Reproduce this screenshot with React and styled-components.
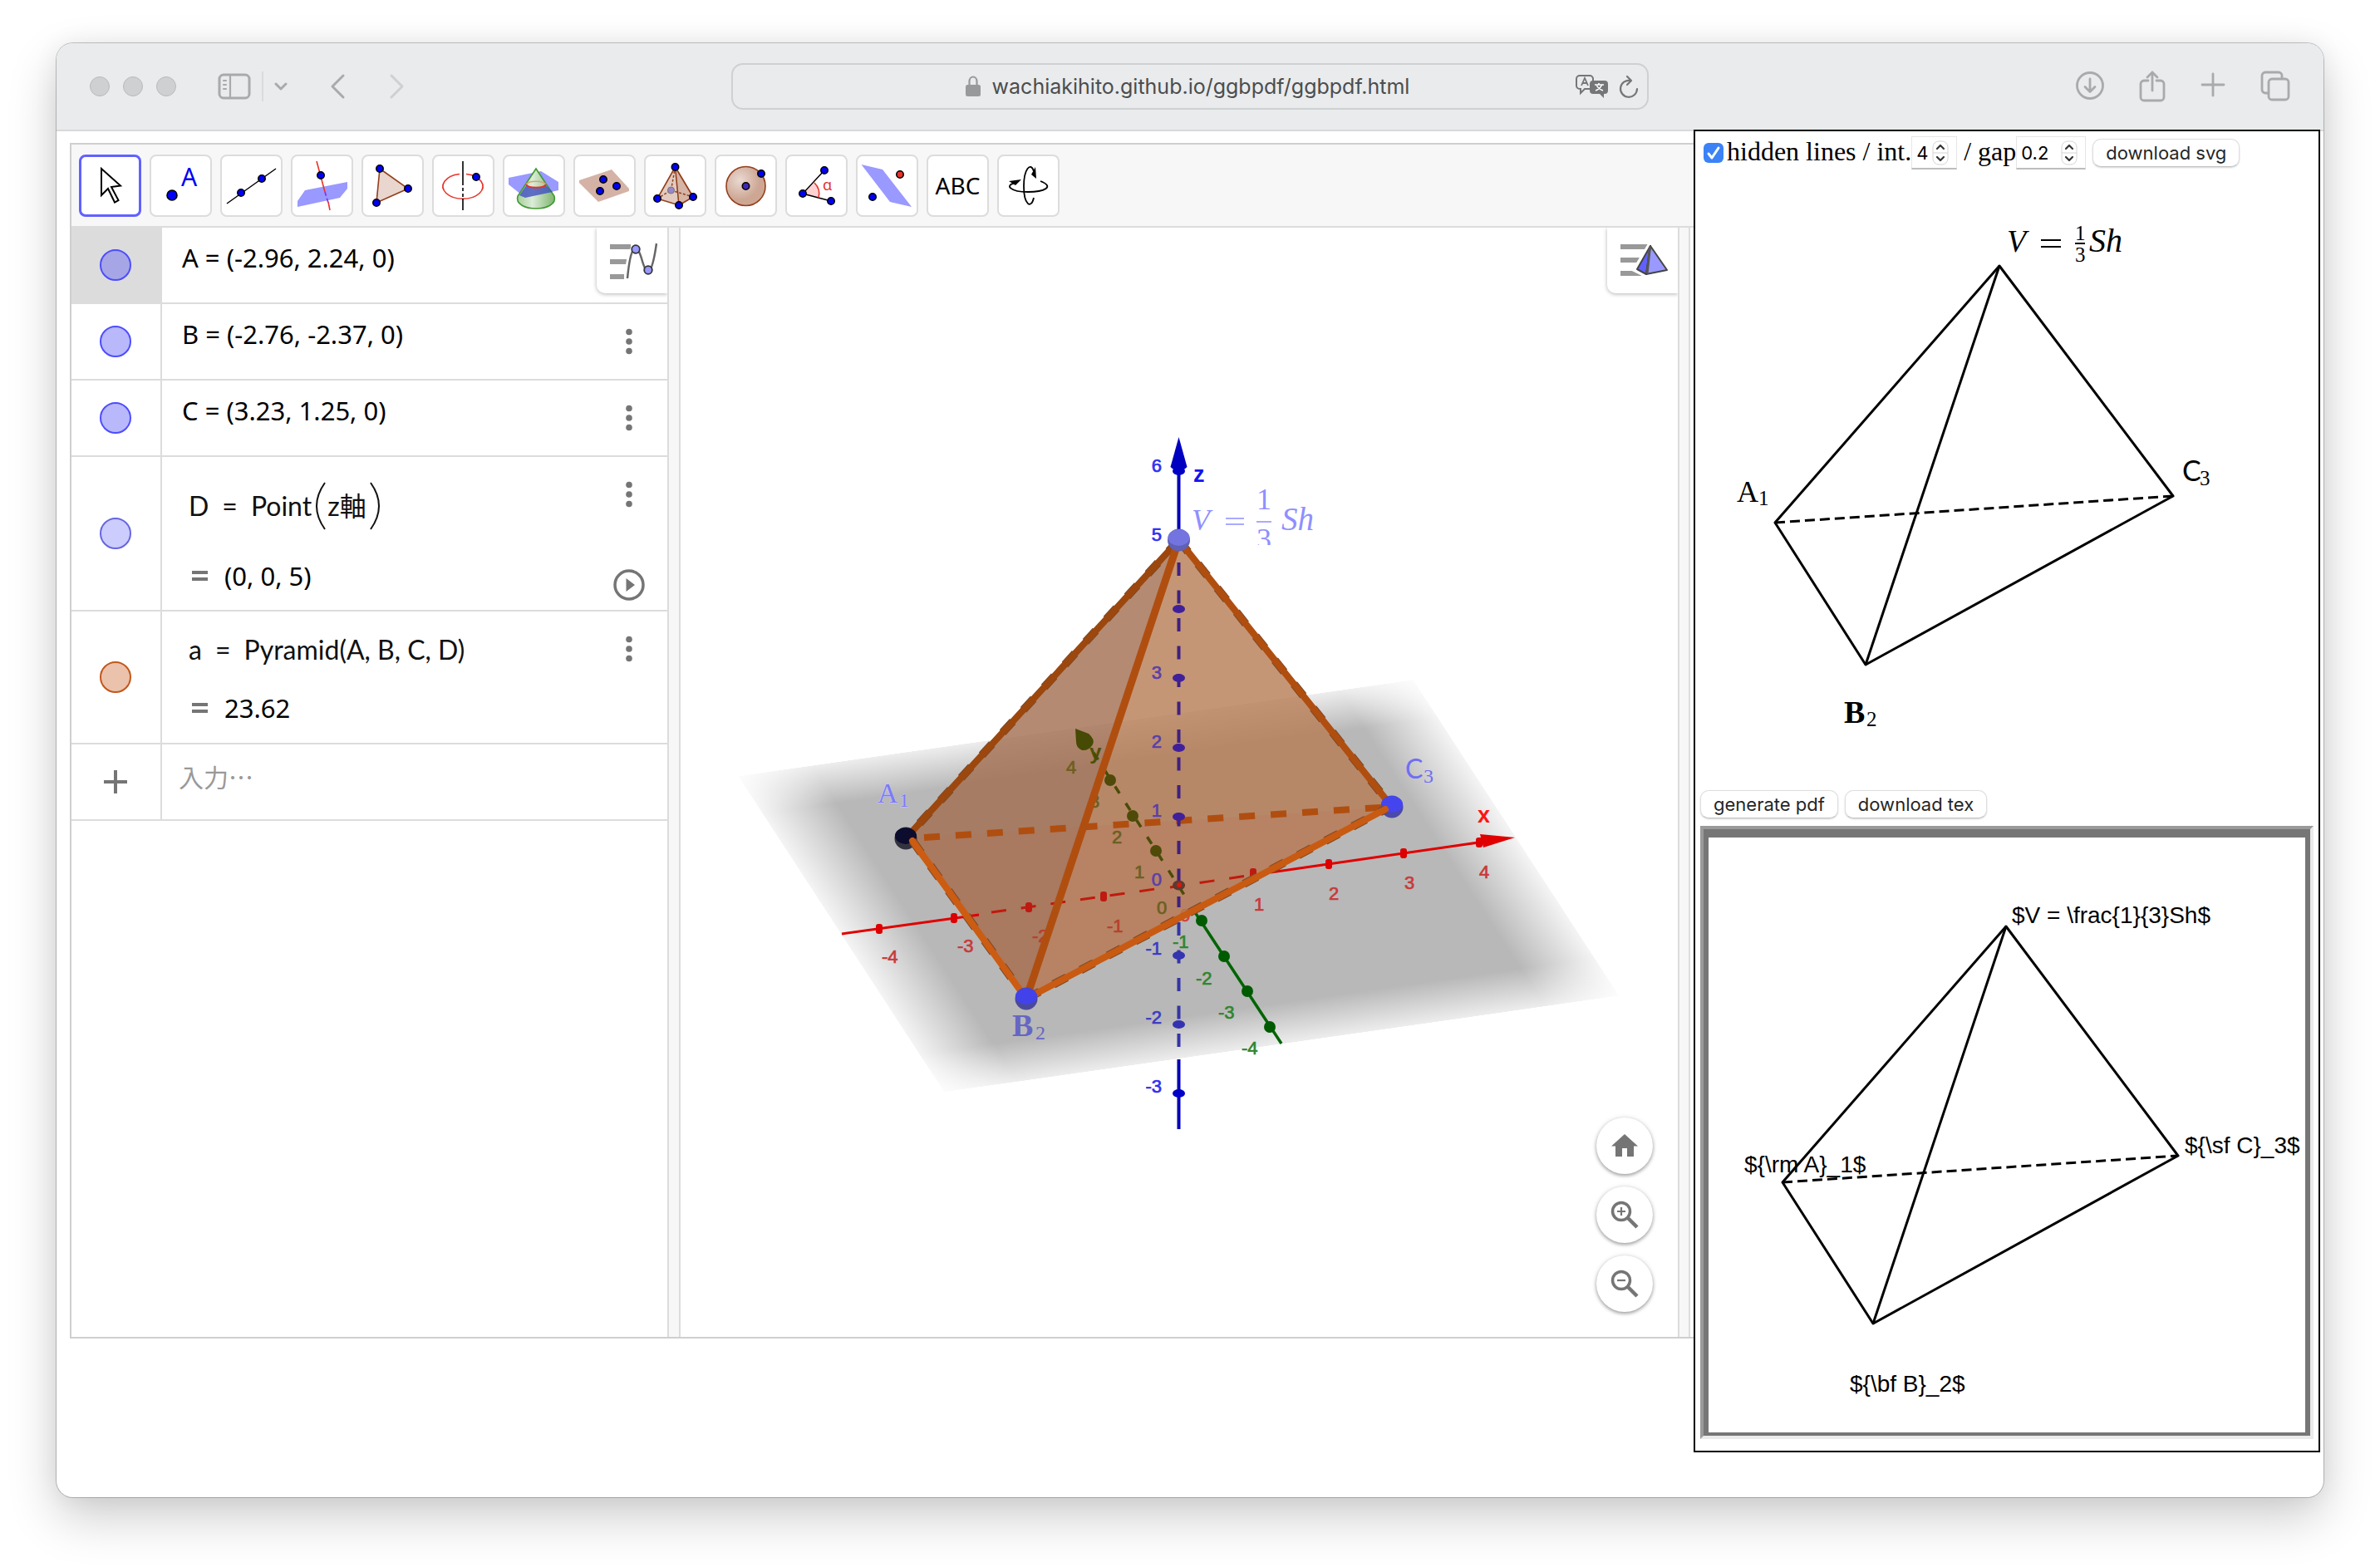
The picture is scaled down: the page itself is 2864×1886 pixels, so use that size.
import React from "react";
import styled, { createGlobalStyle } from "styled-components";

const SANS = `Inter, "Liberation Sans", sans-serif`;
const MATH = `"Noto Sans", "Noto Sans CJK JP", sans-serif`;
const FORMULA = `Lato, "Noto Sans CJK JP", sans-serif`;
const SERIF = `"Liberation Serif", serif`;
const LINE = "#dcdcdc";

const GlobalStyle = createGlobalStyle`
  *, *::before, *::after { box-sizing: border-box; }
  body { margin: 0; background: #fff; }
  button, input { font: inherit; color: inherit; margin: 0; }
  svg { display: block; }
`;

const Desktop = styled.div`
  min-height: 100vh;
  display: flex;
  padding: 52px 68px 84px;
`;

const Window = styled.main`
  flex: 1;
  min-width: 0;
  display: flex;
  flex-direction: column;
  background: #fff;
  border-radius: 20px;
  box-shadow: 0 0 0 1px rgba(0, 0, 0, 0.22), 0 24px 60px rgba(0, 0, 0, 0.2), 0 0 30px rgba(0, 0, 0, 0.06);
`;

/* ---------- Browser chrome ---------- */

const TitleBar = styled.header`
  display: grid;
  grid-template-columns: 1fr minmax(400px, 1104px) 1fr;
  align-items: center;
  height: 106px;
  padding: 0 40px 0 40px;
  background: #e9ebec;
  border-bottom: 2px solid #d8d9da;
  border-radius: 20px 20px 0 0;
`;

const ChromeGroup = styled.div`
  display: flex;
  align-items: center;
  justify-content: ${(p) => (p.$end ? "flex-end" : "flex-start")};
  gap: ${(p) => p.$gap}px;
`;

const Light = styled.button`
  width: 24px;
  height: 24px;
  padding: 0;
  border: 1px solid #b9babb;
  border-radius: 50%;
  background: #cfd0d1;
`;

const ChromeButton = styled.button`
  display: flex;
  padding: 0;
  border: 0;
  background: none;
  color: ${(p) => (p.$faint ? "#cfd0d1" : "#a9aaac")};
`;

const Divider = styled.span`
  width: 2px;
  height: 36px;
  background: #dadbdc;
`;

const AddressBar = styled.div`
  display: flex;
  align-items: center;
  gap: 12px;
  height: 56px;
  padding: 0 10px;
  border: 2px solid #cfd0d2;
  border-radius: 14px;
  color: #6c6d6e;
`;

const AddressField = styled.label`
  flex: 1;
  display: flex;
  align-items: center;
  justify-content: center;
  gap: 14px;
  padding-left: 82px;
`;

const AddressInput = styled.input`
  field-sizing: content;
  padding: 0;
  border: 0;
  background: none;
  font: 25px/32px ${SANS};
  color: #4c4d4e;
`;

/* ---------- Page ---------- */

const Page = styled.div`
  flex: 1;
  display: flex;
  align-items: flex-start;
`;

const Applet = styled.section`
  flex: 1;
  min-width: 0;
  align-self: stretch;
  display: flex;
  flex-direction: column;
  margin: 14px 0 191px 16px;
  border: solid #cfcfcf;
  border-width: 2px 0 2px 2px;
`;

const Toolbar = styled.div`
  display: flex;
  align-items: center;
  gap: 10px;
  height: 100px;
  padding: 0 9px;
  background: #f7f7f7;
  border-bottom: 2px solid ${LINE};
`;

const Tool = styled.button`
  width: 75px;
  height: 75px;
  padding: 0;
  display: flex;
  align-items: center;
  justify-content: center;
  border: ${(p) => (p.$active ? "3px solid #6161ff" : `2px solid ${LINE}`)};
  border-radius: 8px;
  background: #fff;
  font: 28px/40px ${MATH};
  color: #000;
  & > svg {
    flex: none;
  }
`;

const Views = styled.div`
  flex: 1;
  display: grid;
  grid-template-columns: 717px 16px minmax(0, 1fr) 15px 4px;
`;

const Splitter = styled.div`
  background: #f7f7f7;
  border: solid ${LINE};
  border-width: 0 2px;
`;

const AlgebraView = styled.div`
  position: relative;
`;

const StyleButton = styled.button`
  position: absolute;
  top: 0;
  right: 0;
  width: 85px;
  height: 79px;
  padding: 0;
  display: flex;
  align-items: center;
  justify-content: center;
  border: 0;
  border-radius: 0 0 0 10px;
  background: #fff;
  clip-path: inset(0 0 -10px -10px);
  box-shadow: 0 1px 5px rgba(0, 0, 0, 0.3);
`;

const Row = styled.div`
  display: grid;
  grid-template-columns: 109px 1fr auto;
  min-height: ${(p) => p.$height}px;
  border-bottom: 2px solid ${LINE};
`;

const MarbleCell = styled.div`
  display: flex;
  align-items: center;
  justify-content: center;
  padding-right: 1px;
  border-right: 2px solid ${LINE};
  background: ${(p) => (p.$selected ? LINE : "transparent")};
`;

const Marble = styled.button`
  width: 38px;
  height: 38px;
  padding: 0;
  border: 2px solid ${(p) => p.$edge};
  border-radius: 50%;
  background: ${(p) => p.$fill};
`;

const PlusButton = styled.button`
  display: flex;
  padding: 0;
  border: 0;
  background: none;
`;

const Expression = styled.div`
  padding: 16px 0 0 24px;
  font: 31px/40px ${MATH};
  color: #000;
`;

const Definition = styled.div`
  display: flex;
  flex-direction: column;
  gap: ${(p) => p.$gap}px;
  padding: ${(p) => p.$top}px 0 0 32px;
`;

const Formula = styled.div`
  display: flex;
  align-items: center;
  gap: 16px;
  font: 32px/${(p) => p.$line}px ${FORMULA};
  color: #111;
`;

const Call = styled.span`
  display: flex;
  align-items: center;
`;

const TallParen = styled.svg`
  margin: 0 2px 0 4px;
`;

const Value = styled.div`
  display: flex;
  align-items: center;
  gap: 20px;
  padding-left: 4px;
  font: 31px/40px ${MATH};
  color: #000;
`;

const Actions = styled.div`
  display: flex;
  flex-direction: column;
  align-items: center;
  gap: 71px;
  padding: 26px 27px 0 0;
`;

const IconButton = styled.button`
  display: flex;
  align-items: center;
  justify-content: center;
  width: 38px;
  height: 38px;
  padding: 0;
  border: 0;
  background: none;
`;

const EntryInput = styled.input`
  width: 100%;
  height: 76px;
  padding: 0 0 0 20px;
  border: 0;
  outline: 0;
  background: none;
  font: 30px "Noto Sans CJK JP", sans-serif;
  &::placeholder {
    color: #999;
    opacity: 1;
  }
`;

const GraphicsView = styled.div`
  position: relative;
  overflow: hidden;
`;

const Scene = styled.svg`
  width: 100%;
  height: auto;
`;

const ZoomButtons = styled.div`
  position: absolute;
  right: 30px;
  bottom: 30px;
  display: flex;
  flex-direction: column;
  gap: 15px;
`;

const RoundButton = styled.button`
  width: 68px;
  height: 68px;
  padding: 0;
  display: flex;
  align-items: center;
  justify-content: center;
  border: 0;
  border-radius: 50%;
  background: #fff;
  box-shadow: 0 2px 4px rgba(0, 0, 0, 0.35), 0 0 6px rgba(0, 0, 0, 0.1);
`;

/* ---------- Export panel ---------- */

const ExportPanel = styled.aside`
  width: 754px;
  margin: -2px 4px 0 0;
  padding: 6px 6px 14px;
  border: 2px solid #000;
  background: #fff;
`;

const Controls = styled.div`
  display: flex;
  align-items: center;
  height: 40px;
  padding-left: 4px;
`;

const Caption = styled.label`
  padding-bottom: 4px;
  margin-left: ${(p) => p.$space}px;
  font: 32px/34px ${SERIF};
  color: #000;
  white-space: pre;
`;

const Check = styled.input`
  appearance: none;
  flex: none;
  width: 24px;
  height: 24px;
  border-radius: 6px;
  background: #3b82f7
    url("data:image/svg+xml,%3Csvg xmlns='http://www.w3.org/2000/svg' viewBox='0 0 24 24'%3E%3Cpath d='M6 13l4 5 8-12' fill='none' stroke='white' stroke-width='3' stroke-linecap='round' stroke-linejoin='round'/%3E%3C/svg%3E");
`;

const NumberBox = styled.span`
  display: flex;
  align-items: center;
  justify-content: space-between;
  width: ${(p) => p.$width}px;
  height: 40px;
  padding: 0 9px 0 5px;
  border: 1px solid #e6e6e6;
  border-bottom: 2px solid #bdbdbd;
  & > svg {
    flex: none;
  }
`;

const NumberInput = styled.input`
  appearance: textfield;
  width: 34px;
  flex: 0 1 auto;
  min-width: 0;
  padding: 0;
  border: 0;
  outline: 0;
  font: 22px/28px ${SANS};
  color: #000;
  &::-webkit-inner-spin-button {
    appearance: none;
    display: none;
  }
`;

const PushButton = styled.button`
  height: 34px;
  padding: 0 15px;
  border: 1px solid #dedede;
  border-bottom-color: #c4c4c4;
  border-radius: 10px;
  background: #fff;
  box-shadow: 0 1px 2px rgba(0, 0, 0, 0.18);
  font: 22px/30px ${SANS};
  color: #262626;
  white-space: nowrap;
`;

const ButtonRow = styled.div`
  display: flex;
  gap: 8px;
  padding: 5px 0 9px;
`;

const DownloadSvg = styled(PushButton)`
  margin-left: 8px;
`;

const Figure = styled.svg`
  width: 100%;
  height: auto;
`;

const PdfFrame = styled.div`
  padding: 10px 6px 4px;
  border: 4px solid;
  border-color: #9a9a9a #ebebeb #ebebeb #9a9a9a;
  background: #767676;
`;

const PdfPage = styled.div`
  background: #fff;
`;

/* ---------- Icons ---------- */

const Dot = ({ x, y, r = 4.2, fill = "#0000f5" }) => (
  <circle cx={x} cy={y} r={r} fill={fill} stroke="#000" strokeWidth="1.6" />
);

const ToolSvg = ({ children }) => (
  <svg width="75" height="75" viewBox="0 0 75 75" fill="none" aria-hidden="true">
    {children}
  </svg>
);

const TOOLS = [
  {
    label: "Move",
    icon: (
      <path d="M27 17L50 37.5L39 39L47.5 55L43 57.5L35 41L27 49Z" fill="#fff" stroke="#000" strokeWidth="2" />
    ),
  },
  {
    label: "Point",
    icon: (
      <>
        <Dot x={27} y={49} r={6} />
        <text x="38" y="38" fontSize="30" fontFamily="Noto Sans, sans-serif" fill="#0000f5">A</text>
      </>
    ),
  },
  {
    label: "Line",
    icon: (
      <>
        <path d="M8 59L67 17" stroke="#000" strokeWidth="1.5" />
        <Dot x={25} y={46} />
        <Dot x={50} y={29} />
      </>
    ),
  },
  {
    label: "Perpendicular line",
    icon: (
      <>
        <path d="M17 43L68 33V41L59 52L8 63V56Z" fill="#9999ff" />
        <path d="M31 8L41 45M45 57L47 67" stroke="#e8332a" strokeWidth="1.6" />
        <path d="M41 45L45 58" stroke="#8a2be2" strokeWidth="1.6" strokeDasharray="5 3" />
        <Dot x={36} y={25} />
      </>
    ),
  },
  {
    label: "Polygon",
    icon: (
      <>
        <path d="M22 17L56 41L18 58Z" fill="#e8d6cf" stroke="#933f1a" strokeWidth="1.6" />
        <Dot x={22} y={17} />
        <Dot x={56} y={41} />
        <Dot x={18} y={58} />
      </>
    ),
  },
  {
    label: "Circle with axis",
    icon: (
      <>
        <path d="M41 23.5A24 15 0 1 1 33 23.5" stroke="#e8332a" strokeWidth="1.6" />
        <path d="M37 8V37M37 53V67" stroke="#000" strokeWidth="1.6" />
        <path d="M37 40V53" stroke="#000" strokeWidth="1.6" strokeDasharray="4 3" />
        <Dot x={53} y={27} />
      </>
    ),
  },
  {
    label: "Intersect surfaces",
    icon: (
      <>
        <defs>
          <linearGradient id="coneFill">
            <stop offset="0" stopColor="#a5cf9b" />
            <stop offset="0.4" stopColor="#dcecd8" />
            <stop offset="1" stopColor="#7db56e" />
          </linearGradient>
        </defs>
        <path d="M7 28L46 20L67 33V43L27 52L7 36Z" fill="#9999ff" />
        <path d="M40 17L18 50C12 70 68 70 62 50Z" fill="url(#coneFill)" stroke="#3f9a2e" strokeWidth="1.6" />
        <path d="M29 36L20 49L27 52L60 45L51 36C48 41 32 41 29 36Z" fill="#3f4fc0" opacity="0.8" />
        <path d="M28 36C32 31 48 31 52 36" stroke="#d9a07a" strokeWidth="1.6" />
        <path d="M28 36C31 41 49 41 52 36" stroke="#e8332a" strokeWidth="2" />
      </>
    ),
  },
  {
    label: "Plane through 3 points",
    icon: (
      <>
        <path d="M7 31L46 18L67 41V44L30 57L7 34Z" fill="#d4b3a6" />
        <Dot x={36} y={30} />
        <Dot x={52} y={38} />
        <Dot x={32} y={44} />
      </>
    ),
  },
  {
    label: "Pyramid",
    icon: (
      <>
        <path d="M37.5 15L16 53L42 61L59 51Z" fill="#e2cbc1" stroke="#933f1a" strokeWidth="1.6" />
        <path d="M37.5 15L42 61L59 51Z" fill="#d6b5a7" stroke="#933f1a" strokeWidth="1.6" />
        <path d="M37.5 15L32.5 43L16 53M32.5 43L59 51" stroke="#933f1a" strokeWidth="1.5" strokeDasharray="3 2" />
        <circle cx="32.5" cy="43" r="4" fill="#9a86cf" stroke="#776" />
        <Dot x={37.5} y={15} />
        <Dot x={16} y={53} />
        <Dot x={42} y={61} />
        <Dot x={59} y={51} />
      </>
    ),
  },
  {
    label: "Sphere",
    icon: (
      <>
        <defs>
          <radialGradient id="ballFill" cx="0.35" cy="0.35">
            <stop offset="0" stopColor="#ead9d2" />
            <stop offset="1" stopColor="#cda794" />
          </radialGradient>
        </defs>
        <circle cx="37.5" cy="38" r="23.5" fill="url(#ballFill)" stroke="#933f1a" strokeWidth="1.6" />
        <Dot x={37.5} y={38} fill="#3f28b5" />
        <Dot x={56} y={23} />
      </>
    ),
  },
  {
    label: "Angle",
    icon: (
      <>
        <path d="M21 47L35 34C40 39 42 45 40 52Z" fill="#ffd3d3" />
        <path d="M47 19L21 47L55 56" stroke="#000" strokeWidth="1.5" />
        <path d="M35 34C40 39 42 45 40 52" stroke="#e8332a" strokeWidth="1.6" />
        <text x="45" y="43" fontSize="18" fontFamily="Noto Sans, sans-serif" fill="#e8332a">α</text>
        <Dot x={21} y={47} />
        <Dot x={47} y={19} />
        <Dot x={55} y={56} />
      </>
    ),
  },
  {
    label: "Reflect about plane",
    icon: (
      <>
        <path d="M6.5 12L32 18L67 63L41 57Z" fill="#9999ff" />
        <Dot x={53} y={24} fill="#e8332a" />
        <Dot x={20} y={51} />
      </>
    ),
  },
  { label: "Text", text: "ABC" },
  {
    label: "Rotate 3D graphics view",
    icon: (
      <>
        <path d="M52 32C70 39 56 45 37 45C16 45 8 37 22 34" stroke="#000" strokeWidth="1.8" />
        <path d="M44 52C41 66 32 61 32 38C32 18 40 8 44 20" stroke="#000" strokeWidth="1.8" />
        <path d="M14 32L29 30L22 37Z" fill="#000" />
        <path d="M41 24L46 15L47 29Z" fill="#000" />
      </>
    ),
  },
];

const KebabIcon = () => (
  <svg width="38" height="38" viewBox="0 0 38 38" fill="#757575" aria-hidden="true">
    <circle cx="19" cy="7.5" r="3.8" />
    <circle cx="19" cy="19" r="3.8" />
    <circle cx="19" cy="30.5" r="3.8" />
  </svg>
);

const PlayIcon = () => (
  <svg width="38" height="38" viewBox="0 0 38 38" aria-hidden="true">
    <circle cx="19" cy="19" r="17" fill="none" stroke="#757575" strokeWidth="3.5" />
    <path d="M15.5 11L26 19L15.5 27Z" fill="#757575" />
  </svg>
);

const EqualsIcon = () => (
  <svg width="19" height="13" viewBox="0 0 19 13" fill="#757575" aria-label="=">
    <path d="M0 0H19V4H0ZM0 8H19V12H0Z" />
  </svg>
);

const Stepper = () => (
  <svg width="20" height="30" viewBox="0 0 20 30" fill="none" aria-hidden="true">
    <rect x="1" y="1" width="18" height="28" rx="7" fill="#fff" stroke="#d4d4d4" />
    <path d="M1 15H19" stroke="#d4d4d4" />
    <path d="M6 10L10 6L14 10M6 20L10 24L14 20" stroke="#333" strokeWidth="2.2" strokeLinecap="round" strokeLinejoin="round" />
  </svg>
);

const stroke = (width) => ({
  fill: "none",
  stroke: "currentColor",
  strokeWidth: width,
  strokeLinecap: "round",
  strokeLinejoin: "round",
});

/* ---------- Drawings ---------- */

const V = [1418.5, 650];
const A = [1090, 1009];
const B = [1235, 1202];
const C = [1675, 971];
const path = (...pts) => "M" + pts.map((p) => p.join(" ")).join("L");

const Edge = ({ from, to, color, width = 8 }) => (
  <g>
    <path d={path(from, to)} stroke="#7d4a28" strokeWidth={width + 2} strokeDasharray="18 19" />
    <path d={path(from, to)} stroke={color} strokeWidth={width} strokeLinecap="round" />
  </g>
);

const Sphere = ({ at, top, bottom }) => (
  <g>
    <circle cx={at[0]} cy={at[1]} r="13.5" fill={bottom} />
    <ellipse cx={at[0]} cy={at[1] - 3} rx="13" ry="10" fill={top} />
  </g>
);

const Z_LABELS = [["6", 568], ["5", 651], ["3", 817], ["2", 900], ["1", 983], ["0", 1066], ["-1", 1149], ["-2", 1232], ["-3", 1315]];
const X_LABELS = [["-4", 1061, 1159], ["-3", 1152, 1146], ["-2", 1242, 1134], ["-1", 1332, 1122], ["0", 1420, 1109], ["1", 1509, 1096], ["2", 1599, 1083], ["3", 1690, 1070], ["4", 1780, 1057]];
const Y_LABELS = [["4", 1283, 931], ["3", 1311, 972], ["2", 1338, 1015], ["1", 1365, 1057], ["0", 1392, 1100], ["-1", 1411, 1141], ["-2", 1439, 1185], ["-3", 1466, 1226], ["-4", 1494, 1269]];
const Z_TICKS = [567, 733, 816, 900, 983, 1150, 1233, 1316];
const X_TICKS = [[1058, 1118], [1148, 1105], [1238, 1092], [1328, 1079], [1508, 1051], [1599, 1040], [1689, 1027], [1780, 1014]];
const Y_TICKS = [[1336, 939], [1363, 982], [1391, 1024], [1446, 1108], [1473, 1151], [1501, 1193], [1528, 1236]];

const AxisLabel = ({ color, ...rest }) => (
  <text fill={color} stroke={color} strokeWidth="0.7" {...rest} />
);

const SpaceScene = () => (
  <Scene viewBox="819 274 1200 1335" fill="none" role="img" aria-label="3D graphics">
    <defs>
      <linearGradient id="fadeX">
        <stop offset="0" stopColor="#fff" stopOpacity="0.15" />
        <stop offset="0.11" stopColor="#fff" />
        <stop offset="0.89" stopColor="#fff" />
        <stop offset="1" stopColor="#fff" stopOpacity="0.15" />
      </linearGradient>
      <linearGradient id="fadeY" x2="0" y2="1">
        <stop offset="0" stopColor="#b8b8b8" stopOpacity="0.25" />
        <stop offset="0.12" stopColor="#b8b8b8" />
        <stop offset="0.88" stopColor="#b8b8b8" />
        <stop offset="1" stopColor="#b8b8b8" stopOpacity="0.25" />
      </linearGradient>
      <mask id="planeMask" maskUnits="userSpaceOnUse" x="0" y="0" width="1" height="1">
        <rect width="1" height="1" fill="url(#fadeX)" />
      </mask>
    </defs>

    <g transform="matrix(812.7 -116 248 380.6 888 934)">
      <rect width="1" height="1" fill="url(#fadeY)" mask="url(#planeMask)" />
    </g>

    <g fontFamily="Liberation Sans, sans-serif" fontSize="22">
      <AxisLabel color="#d04040" x="1420" y="1109">0</AxisLabel>
    </g>

    <path d={path(V, A, B) + "Z"} fill="#a26d4f" fillOpacity="0.8" />
    <path d={path(V, B, C) + "Z"} fill="#b67c54" fillOpacity="0.8" />
    <path d={path(A, B, C) + "Z"} fill="#b86a50" fillOpacity="0.14" />

    <path d={path([1112, 1008], C)} stroke="#b04e10" strokeWidth="8" strokeDasharray="19 19" />

    <g fontFamily="Liberation Sans, sans-serif" fontSize="22">
      {Z_LABELS.map(([t, y]) => (
        <AxisLabel key={t} x="1398" y={y} textAnchor="end" color={y > 660 && y < 1080 ? "#5b3fa8" : y > 1080 && y < 1300 ? "#3b3bc4" : "#2f2ff0"}>{t}</AxisLabel>
      ))}
      {X_LABELS.filter(([t]) => t !== "0").map(([t, x, y]) => (
        <AxisLabel key={t} x={x} y={y} color={t === "-2" || t === "-1" ? "#b8402c" : "#c83a3a"}>{t}</AxisLabel>
      ))}
      {Y_LABELS.map(([t, x, y], i) => (
        <AxisLabel key={t} x={x} y={y} color={i < 5 ? "#6b6020" : "#2f862f"}>{t}</AxisLabel>
      ))}
      <text x="1311" y="914" fontSize="26" fontWeight="bold" fill="#4c5208">y</text>
      <text x="1436" y="580" fontSize="27" fontWeight="bold" fill="#1414f0">z</text>
      <text x="1778" y="990" fontSize="27" fontWeight="bold" fill="#ff1414">x</text>
    </g>

    <g stroke="#c01a0c" strokeWidth="3">
      <path d="M1193 1098L1390 1070" strokeDasharray="18 18" />
      <path d="M1408 1068L1500 1054" strokeDasharray="18 18" />
      <path d="M1013 1124L1178 1101M1529 1050L1786 1013" stroke="#e00000" />
    </g>
    {X_TICKS.map(([x, y], i) => (
      <rect key={x} x={x - 4} y={y - 6} width="8" height="12" rx="3" fill={i > 1 && i < 5 ? "#bf1a10" : "#dd0000"} />
    ))}
    <path d="M1781 1004L1823 1008L1785 1020Z" fill="#e00000" />

    <g strokeWidth="3.5">
      <path d="M1316 906L1432 1088" stroke="#4a4c06" strokeDasharray="10 14" />
      <path d="M1438 1098L1542 1256" stroke="#006400" />
    </g>
    {Y_TICKS.map(([x, y], i) => (
      <ellipse key={x} cx={x} cy={y} rx="7" ry="7" fill={i < 3 ? "#4f4a08" : "#005a00"} />
    ))}
    <path d="M1294 877L1310 883Q1318 890 1315 896Q1310 904 1302 903Q1295 900 1295 893Z" fill="#464a04" />

    <g strokeWidth="4">
      <path d="M1418.5 677V1092" stroke="#3f2080" strokeDasharray="16 17.5" />
      <path d="M1418.5 1110V1260" stroke="#3434a6" strokeDasharray="16 17.5" />
      <path d="M1418.5 560V640M1418.5 1275V1359" stroke="#0000b8" />
    </g>
    {Z_TICKS.map((y) => (
      <ellipse key={y} cx="1418.5" cy={y} rx="7.5" ry="5" fill={y < 600 || y > 1300 ? "#0000c8" : y > 1100 ? "#3434b0" : "#40209a"} />
    ))}
    <path d="M1418.5 526L1428.5 562Q1418.5 572 1408.5 562Z" fill="#0000c0" />
    <ellipse cx="1418.5" cy="1065.5" rx="7.5" ry="6" fill="#5c3a30" />
    <circle cx="1419" cy="1065" r="3" fill="#d81808" />

    <Edge from={V} to={A} color="#9c470e" />
    <Edge from={V} to={C} color="#b04e10" />
    <Sphere at={A} top="#0c0c2e" bottom="#33333f" />
    <Edge from={[1098, 1012]} to={B} color="#cc5c12" />
    <Sphere at={C} top="#4545f0" bottom="#4a4aa8" />
    <Edge from={B} to={[1667, 974]} color="#c85a12" />
    <path d={path(V, B)} stroke="#b04e10" strokeWidth="9" />
    <Sphere at={B} top="#4242ea" bottom="#4a4a9c" />
    <Sphere at={V} top="#7474e0" bottom="#6060b4" />

    <g fontFamily="Liberation Serif, serif" fontSize="36" fill="#8f8fff">
      <text x="1434" y="638" fontStyle="italic">V</text>
      <path d="M1475 624H1497M1475 631H1497M1512 628H1530" stroke="#8f8fff" strokeWidth="1.5" />
      <text x="1512" y="613">1</text>
      <clipPath id="fracClip"><path d="M1500 630H1540V656H1500Z" /></clipPath>
      <text x="1512" y="661" clipPath="url(#fracClip)">3</text>
      <text x="1542" y="638" fontStyle="italic" fontSize="39">Sh</text>
      <g fill="#7b7bf5" stroke="#c9c9f4" strokeWidth="1" paintOrder="stroke" fontSize="34">
        <text x="1056" y="966">A</text>
        <text x="1082" y="971" fontSize="24">1</text>
      </g>
      <g fill="#6666c4">
        <text x="1218" y="1247" fontWeight="bold" fontSize="38">B</text>
        <text x="1246" y="1251" fontSize="24">2</text>
      </g>
      <g fill="#6f6ff2">
        <text x="1691" y="937" fontFamily="Lato, sans-serif" fontSize="32">C</text>
        <text x="1713" y="942" fontSize="24">3</text>
      </g>
    </g>
  </Scene>
);

const Wire = ({ v, a, b, c }) => (
  <g fill="none" stroke="#000" strokeWidth="3" strokeLinejoin="round">
    <path d={path(c, v, a, b, c, v)} />
    <path d={path(v, b)} />
    <path d={path(a, c)} strokeDasharray="12 6" />
  </g>
);

const SvgFigure = () => (
  <Figure viewBox="0 0 738 742" role="img" aria-label="Pyramid figure">
    <Wire v={[360, 116]} a={[90, 425]} b={[199, 596]} c={[569, 393]} />
    <g fontFamily="Liberation Serif, serif" fontSize="36">
      <text x="369" y="99" fontStyle="italic" fontSize="38">V</text>
      <path d="M410 85H434M410 93H434M451 89H463" stroke="#000" strokeWidth="2" />
      <text x="451" y="85" fontSize="25">1</text>
      <text x="451" y="111" fontSize="25">3</text>
      <text x="468" y="99" fontStyle="italic" fontSize="40">Sh</text>
      <text x="44" y="400" fontSize="36">A</text>
      <text x="70" y="404" fontSize="25">1</text>
      <text x="173" y="666" fontWeight="bold" fontSize="38">B</text>
      <text x="200" y="670" fontSize="25">2</text>
      <text x="580" y="375" fontFamily="Lato, sans-serif" fontSize="34">C</text>
      <text x="601" y="380" fontSize="25">3</text>
    </g>
  </Figure>
);

const PdfFigure = () => (
  <Figure viewBox="0 0 718 716" role="img" aria-label="PDF preview">
    <Wire v={[358, 107]} a={[89, 415]} b={[198, 585]} c={[565, 383]} />
    <g fontFamily="Liberation Sans, sans-serif" fontSize="28">
      <text x="365" y="103">{"$V = \\frac{1}{3}Sh$"}</text>
      <text x="43" y="403">{"${\\rm A}_1$"}</text>
      <text x="573" y="380">{"${\\sf C}_3$"}</text>
      <text x="170" y="667">{"${\\bf B}_2$"}</text>
    </g>
  </Figure>
);

const POINTS = [
  { name: "A", text: "A = (-2.96, 2.24, 0)", fill: "#a6a6e6", selected: true },
  { name: "B", text: "B = (-2.76, -2.37, 0)", fill: "#b8b8fb" },
  { name: "C", text: "C = (3.23, 1.25, 0)", fill: "#b8b8fb" },
];

const MenuButton = ({ name }) => (
  <IconButton aria-label={`Options for ${name}`}>
    <KebabIcon />
  </IconButton>
);

export default function App() {
  return (
    <>
      <GlobalStyle />
      <Desktop>
        <Window>
          <TitleBar>
            <ChromeGroup $gap={50}>
              <ChromeGroup $gap={16}>
                <Light aria-label="Close" />
                <Light aria-label="Minimize" />
                <Light aria-label="Full screen" />
              </ChromeGroup>
              <ChromeGroup $gap={13}>
                <ChromeButton aria-label="Sidebar">
                  <svg width="40" height="32" viewBox="0 0 40 32" {...stroke(3)}>
                    <rect x="2" y="2" width="36" height="28" rx="5" />
                    <path d="M15 2V30M7 9H10M7 14H10M7 19H10" strokeWidth="2.2" />
                  </svg>
                </ChromeButton>
                <Divider />
                <ChromeButton aria-label="Tab groups">
                  <svg width="16" height="10" viewBox="0 0 16 10" {...stroke(3)}>
                    <path d="M2 2L8 8L14 2" />
                  </svg>
                </ChromeButton>
              </ChromeGroup>
              <ChromeGroup $gap={52}>
                <ChromeButton aria-label="Back">
                  <svg width="20" height="32" viewBox="0 0 20 32" {...stroke(3)}>
                    <path d="M17 3L4 16L17 29" />
                  </svg>
                </ChromeButton>
                <ChromeButton aria-label="Forward" $faint>
                  <svg width="20" height="32" viewBox="0 0 20 32" {...stroke(3)}>
                    <path d="M3 3L16 16L3 29" />
                  </svg>
                </ChromeButton>
              </ChromeGroup>
            </ChromeGroup>
            <AddressBar>
              <AddressField>
                <svg width="18" height="26" viewBox="0 0 18 26" role="img" aria-label="Address">
                  <path d="M4.5 12V7a4.5 5.5 0 0 1 9 0V12" fill="none" stroke="#98999a" strokeWidth="2.2" />
                  <rect y="11" width="18" height="14" rx="2.5" fill="#98999a" />
                </svg>
                <AddressInput type="text" defaultValue="wachiakihito.github.io/ggbpdf/ggbpdf.html" />
              </AddressField>
              <ChromeButton aria-label="Translate">
                <svg width="40" height="30" viewBox="0 0 40 30" fill="none">
                  <path d="M5 2H17a4 4 0 0 1 4 4V14a4 4 0 0 1-4 4H11L6 23V18H5a4 4 0 0 1-4-4V6a4 4 0 0 1 4-4Z" stroke="#757677" strokeWidth="2" />
                  <path d="M7 14L11 5L15 14M8.5 11H13.5" stroke="#757677" strokeWidth="1.8" />
                  <path d="M21 8H35a4 4 0 0 1 4 4V20a4 4 0 0 1-4 4H34V29L29 24H21a4 4 0 0 1-4-4V12a4 4 0 0 1 4-4Z" fill="#757677" />
                  <path d="M23 13H34M28 11V13M31.5 13C30 17 27 19 24 20M25.5 14C27 17 30 19 33 20" stroke="#fff" strokeWidth="1.6" />
                </svg>
              </ChromeButton>
              <ChromeButton aria-label="Reload">
                <svg width="24" height="30" viewBox="0 0 24 30" fill="none" stroke="#757677" strokeWidth="2.2" strokeLinecap="round" strokeLinejoin="round">
                  <path d="M14 8A10 10 0 1 0 22 18M10 3L15 8L10 13" />
                </svg>
              </ChromeButton>
            </AddressBar>
            <ChromeGroup $gap={42} $end>
              <ChromeButton aria-label="Downloads">
                <svg width="34" height="38" viewBox="0 0 34 38" {...stroke(2.8)}>
                  <circle cx="17" cy="18" r="15.5" />
                  <path d="M17 10V25M11 19.5L17 25.5L23 19.5" />
                </svg>
              </ChromeButton>
              <ChromeButton aria-label="Share">
                <svg width="32" height="38" viewBox="0 0 32 38" {...stroke(2.8)}>
                  <path d="M11 12H6a4 4 0 0 0-4 4V32a4 4 0 0 0 4 4H26a4 4 0 0 0 4-4V16a4 4 0 0 0-4-4H21M16 24V2M10 8L16 2L22 8" />
                </svg>
              </ChromeButton>
              <ChromeButton aria-label="New tab">
                <svg width="30" height="38" viewBox="0 0 30 38" {...stroke(2.8)}>
                  <path d="M2 17H28M15 4V30" />
                </svg>
              </ChromeButton>
              <ChromeButton aria-label="Tab overview">
                <svg width="36" height="38" viewBox="0 0 36 38" {...stroke(2.8)}>
                  <rect x="10" y="10" width="24" height="25" rx="4" />
                  <path d="M9 27H6a4 4 0 0 1-4-4V6a4 4 0 0 1 4-4H22a4 4 0 0 1 4 4V9" />
                </svg>
              </ChromeButton>
            </ChromeGroup>
          </TitleBar>

          <Page>
            <Applet>
              <Toolbar role="toolbar">
                {TOOLS.map((tool, i) => (
                  <Tool key={tool.label} aria-label={tool.label} $active={i === 0}>
                    {tool.text || <ToolSvg>{tool.icon}</ToolSvg>}
                  </Tool>
                ))}
              </Toolbar>
              <Views>
                <AlgebraView>
                  {POINTS.map((pt) => (
                    <Row key={pt.name} $height={92}>
                      <MarbleCell $selected={pt.selected}>
                        <Marble aria-label={`Show ${pt.name}`} $fill={pt.fill} $edge="#4d4dff" />
                      </MarbleCell>
                      <Expression>{pt.text}</Expression>
                      <Actions>{!pt.selected && <MenuButton name={pt.name} />}</Actions>
                    </Row>
                  ))}
                  <Row $height={186}>
                    <MarbleCell>
                      <Marble aria-label="Show D" $fill="#ccccfd" $edge="#6666e0" />
                    </MarbleCell>
                    <Definition $top={29} $gap={34}>
                      <Formula $line={60}>
                        <span>D</span>
                        <span>=</span>
                        <Call>
                          Point
                          <TallParen width="13" height="58" viewBox="0 0 13 58" aria-label="(">
                            <path d="M12 1Q-8 29 12 57" fill="none" stroke="#111" strokeWidth="2" />
                          </TallParen>
                          z軸
                          <TallParen width="13" height="58" viewBox="0 0 13 58" aria-label=")">
                            <path d="M1 1Q21 29 1 57" fill="none" stroke="#111" strokeWidth="2" />
                          </TallParen>
                        </Call>
                      </Formula>
                      <Value>
                        <EqualsIcon />
                        (0, 0, 5)
                      </Value>
                    </Definition>
                    <Actions>
                      <MenuButton name="D" />
                      <IconButton aria-label="Play animation">
                        <PlayIcon />
                      </IconButton>
                    </Actions>
                  </Row>
                  <Row $height={160}>
                    <MarbleCell>
                      <Marble aria-label="Show a" $fill="#ebc2ac" $edge="#c2571a" />
                    </MarbleCell>
                    <Definition $top={26} $gap={30}>
                      <Formula $line={40}>
                        <span>a</span>
                        <span>=</span>
                        <Call>Pyramid(A, B, C, D)</Call>
                      </Formula>
                      <Value>
                        <EqualsIcon />
                        23.62
                      </Value>
                    </Definition>
                    <Actions>
                      <MenuButton name="a" />
                    </Actions>
                  </Row>
                  <Row $height={92}>
                    <MarbleCell>
                      <PlusButton aria-label="Add">
                        <svg width="28" height="28" viewBox="0 0 28 28" stroke="#757575" strokeWidth="4">
                          <path d="M0 14H28M14 0V28" />
                        </svg>
                      </PlusButton>
                    </MarbleCell>
                    <EntryInput type="text" placeholder="入力…" aria-label="入力" />
                  </Row>
                  <StyleButton aria-label="Algebra style">
                    <svg width="60" height="50" viewBox="0 0 60 50" fill="none">
                      <path d="M3 8H28M3 26H23M3 44H20" stroke="#999" strokeWidth="6" />
                      <path d="M24 46C28 4 35 2 41 22C47 44 53 46 59 4" stroke="#fff" strokeWidth="8" />
                      <path d="M24 46C28 4 35 2 41 22C47 44 53 46 59 4" stroke="#666" strokeWidth="2.5" />
                      <circle cx="34" cy="11" r="4.8" fill="#9999ff" stroke="#333" strokeWidth="1.8" />
                      <circle cx="49" cy="36" r="4.8" fill="#9999ff" stroke="#333" strokeWidth="1.8" />
                    </svg>
                  </StyleButton>
                </AlgebraView>
                <Splitter />
                <GraphicsView>
                  <SpaceScene />
                  <StyleButton aria-label="3D graphics style">
                    <svg width="60" height="50" viewBox="0 0 60 50" fill="none">
                      <path d="M3 8H36M3 24H26M3 40H28" stroke="#999" strokeWidth="6" />
                      <path d="M39 7L22 35L34 41L59 36Z" fill="#fff" stroke="#fff" strokeWidth="8" />
                      <path d="M39 7L23 35L34 41Z" fill="#6161ff" stroke="#444" strokeWidth="2" strokeLinejoin="round" />
                      <path d="M39 7L34 41L59 36Z" fill="#9999ff" stroke="#444" strokeWidth="2" strokeLinejoin="round" />
                      <path d="M38.5 8L35 40" stroke="#555" strokeWidth="3" />
                    </svg>
                  </StyleButton>
                  <ZoomButtons>
                    <RoundButton aria-label="Standard view">
                      <svg width="32" height="28" viewBox="0 0 32 28" fill="#757575">
                        <path d="M16 0L32 14.5H27V27H19V17H13V27H5V14.5H0Z" />
                      </svg>
                    </RoundButton>
                    <RoundButton aria-label="Zoom in">
                      <svg width="34" height="34" viewBox="0 0 34 34" fill="none" stroke="#757575">
                        <circle cx="13" cy="13" r="10.5" strokeWidth="3.5" />
                        <path d="M21 21L32 32" strokeWidth="4.5" />
                        <path d="M8 13H18M13 8V18" strokeWidth="2.2" />
                      </svg>
                    </RoundButton>
                    <RoundButton aria-label="Zoom out">
                      <svg width="34" height="34" viewBox="0 0 34 34" fill="none" stroke="#757575">
                        <circle cx="13" cy="13" r="10.5" strokeWidth="3.5" />
                        <path d="M21 21L32 32" strokeWidth="4.5" />
                        <path d="M8 13H18" strokeWidth="2.2" />
                      </svg>
                    </RoundButton>
                  </ZoomButtons>
                </GraphicsView>
                <Splitter />
              </Views>
            </Applet>

            <ExportPanel>
              <Controls>
                <Check id="hidden-lines" type="checkbox" defaultChecked />
                <Caption htmlFor="hidden-lines" $space={4}>hidden lines</Caption>
                <Caption htmlFor="interval" $space={8}>/ int.</Caption>
                <NumberBox $width={55}>
                  <NumberInput id="interval" type="number" defaultValue="4" />
                  <Stepper />
                </NumberBox>
                <Caption htmlFor="gap" $space={8}>/ gap</Caption>
                <NumberBox $width={84}>
                  <NumberInput id="gap" type="number" step="0.1" defaultValue="0.2" />
                  <Stepper />
                </NumberBox>
                <DownloadSvg>download svg</DownloadSvg>
              </Controls>
              <SvgFigure />
              <ButtonRow>
                <PushButton>generate pdf</PushButton>
                <PushButton>download tex</PushButton>
              </ButtonRow>
              <PdfFrame>
                <PdfPage>
                  <PdfFigure />
                </PdfPage>
              </PdfFrame>
            </ExportPanel>
          </Page>
        </Window>
      </Desktop>
    </>
  );
}
